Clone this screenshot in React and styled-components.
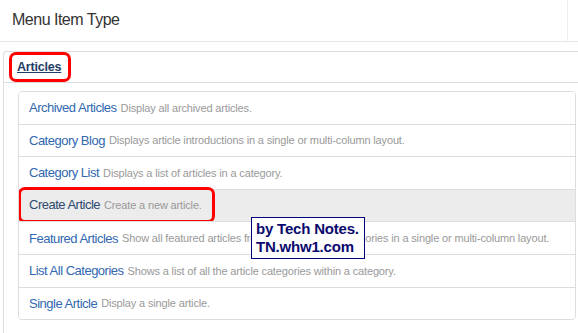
import React from "react";
import styled, { createGlobalStyle } from "styled-components";

const items = [
  { title: "Archived Articles", desc: "Display all archived articles." },
  {
    title: "Category Blog",
    desc: "Displays article introductions in a single or multi-column layout.",
  },
  { title: "Category List", desc: "Displays a list of articles in a category." },
  { title: "Create Article", desc: "Create a new article.", active: true },
  {
    title: "Featured Articles",
    desc: "Show all featured articles from all or specified categories in a single or multi-column layout.",
  },
  {
    title: "List All Categories",
    desc: "Shows a list of all the article categories within a category.",
  },
  { title: "Single Article", desc: "Display a single article." },
];

const App = () => {
  return (
    <>
      <GlobalStyle />
      <Page>
        <Header>
          <HeaderTitle>Menu Item Type</HeaderTitle>
          <HeaderSide />
        </Header>
        <Panel>
          <PanelHeading>
            <Marked>
              <GroupLink>Articles</GroupLink>
            </Marked>
          </PanelHeading>
          <PanelBody>
            <List>
              {items.map((item) => (
                <Row key={item.title} $active={item.active}>
                  {item.active ? (
                    <RowMark>
                      <ItemTitle $active>{item.title}</ItemTitle>
                      <ItemDesc>{item.desc}</ItemDesc>
                    </RowMark>
                  ) : (
                    <>
                      <ItemTitle>{item.title}</ItemTitle>
                      <ItemDesc>{item.desc}</ItemDesc>
                    </>
                  )}
                </Row>
              ))}
            </List>
            <Stamp>
              by Tech Notes.
              <br />
              TN.whw1.com
            </Stamp>
          </PanelBody>
        </Panel>
      </Page>
    </>
  );
};

const GlobalStyle = createGlobalStyle`
  body {
    margin: 0;
    background: #fff;
    font-family: "Liberation Sans", Arial, sans-serif;
    overflow: hidden;
  }
`;

const Page = styled.div`
  width: 578px;
  height: 333px;
  overflow: hidden;
`;

const Header = styled.div`
  display: flex;
  height: 41px;
  border-bottom: 1px solid #e5e5e5;
`;

const HeaderTitle = styled.div`
  flex: 1;
  padding-left: 12px;
  line-height: 39px;
  font-size: 16px;
  letter-spacing: -0.5px;
  color: #333;
`;

const HeaderSide = styled.div`
  width: 10px;
  border-left: 1px solid #eee;
`;

const Panel = styled.div`
  margin: 9px -10px 0 3px;
  border: 1px solid #ddd;
  border-right: none;
  border-bottom: none;
  border-radius: 4px 0 0 0;
  height: 400px;
`;

const PanelHeading = styled.div`
  display: flex;
  align-items: flex-start;
  height: 30px;
  padding-left: 5px;
  border-bottom: 1px solid #ddd;
`;

const Marked = styled.div`
  box-sizing: border-box;
  display: flex;
  align-items: center;
  width: 62px;
  height: 30px;
  padding-left: 5px;
  border: 3px solid #f00;
  border-radius: 7px;
`;

const GroupLink = styled.a`
  font-size: 12.5px;
  font-weight: bold;
  color: #1f3d66;
  text-decoration: underline;
  letter-spacing: -0.2px;
`;

const PanelBody = styled.div`
  position: relative;
  padding: 8px 12px 0 14px;
`;

const List = styled.div`
  border: 1px solid #ddd;
  border-radius: 4px;
  overflow: hidden;
`;

const Row = styled.div`
  display: flex;
  align-items: center;
  gap: 4px;
  height: 31.6px;
  padding-left: 10px;
  white-space: nowrap;
  background: ${(p) => (p.$active ? "#ececec" : "#fff")};
  border-top: 1px solid #ddd;
  position: relative;

  &:first-child {
    border-top: none;
  }
`;

const RowMark = styled.div`
  box-sizing: border-box;
  position: absolute;
  left: -1px;
  top: -3px;
  width: 197px;
  height: 36px;
  padding-left: 8px;
  display: flex;
  align-items: center;
  gap: 4px;
  border: 3px solid #f00;
  border-radius: 7px;
`;

const ItemTitle = styled.span`
  font-size: 13px;
  letter-spacing: -0.5px;
  color: ${(p) => (p.$active ? "#2b4a6e" : "#3268b0")};
`;

const ItemDesc = styled.span`
  font-size: 11px;
  letter-spacing: -0.15px;
  color: #999;
`;

const Stamp = styled.div`
  position: absolute;
  left: 247px;
  top: 134px;
  padding: 2px 5px 2px 4px;
  background: #fff;
  border: 1px solid #000080;
  font-size: 15px;
  font-weight: bold;
  line-height: 18px;
  letter-spacing: -0.2px;
  color: #0a0a6e;
`;

export default App;
